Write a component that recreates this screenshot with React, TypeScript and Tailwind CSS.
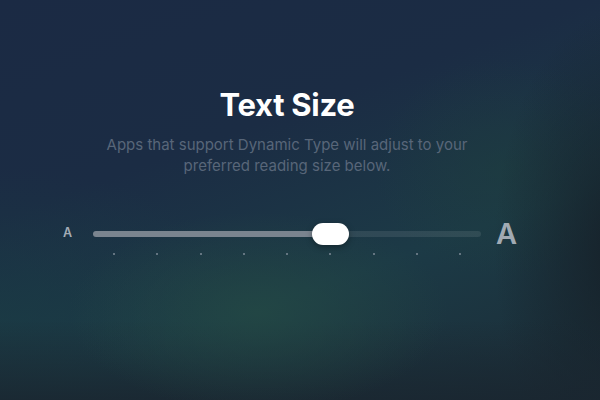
import React from "react";

const TICKS = 9;

export default function App() {
  return (
    <div
      className="relative w-[600px] h-[400px] overflow-hidden bg-[#1b2b42] bg-[radial-gradient(ellipse_190px_100px_at_43%_78%,rgba(36,74,68,0.75),transparent),linear-gradient(180deg,transparent_80%,rgba(26,38,48,0.85)_100%),radial-gradient(ellipse_130px_240px_at_104%_62%,rgba(22,32,40,0.95),transparent),radial-gradient(ellipse_130px_110px_at_84%_42%,rgba(30,62,62,0.55),transparent),radial-gradient(ellipse_260px_160px_at_0%_82%,rgba(26,60,68,0.7),transparent),linear-gradient(160deg,#1b2a44_0%,#1b2c44_35%,#1c3a46_65%,#1b2c36_100%)]"
      style={{ fontFamily: "Inter, 'Noto Sans', sans-serif" }}
    >
      <div className="flex flex-col items-center pt-[86px]">
        <h1 className="text-[31px] leading-[37px] font-bold text-white tracking-[-0.3px] ml-[-26px]">
          Text Size
        </h1>
        <p className="mt-[11px] text-[15px] leading-[21px] text-[#586679] text-center w-[380px] ml-[-26px]">
          Apps that support Dynamic Type will adjust to your preferred reading size below.
        </p>
      </div>

      <div className="flex items-center mt-[43px] pl-[63px]">
        <span className="text-[12.5px] font-semibold text-[#a3acb6] leading-none w-[10px]">A</span>
        <div className="relative ml-[20px] w-[388px]">
          <div className="flex h-[6px] rounded-full overflow-hidden">
            <div className="w-[236px] bg-[#7a848f]" />
            <div className="flex-1 bg-[rgba(255,255,255,0.09)]" />
          </div>
          <div className="absolute left-[219px] top-[-8px] w-[37px] h-[22px] rounded-full bg-white shadow-[0_2px_6px_rgba(0,0,0,0.35)]" />
          <div className="absolute left-0 right-0 top-[22px] flex justify-between px-[20px]">
            {Array.from({ length: TICKS }).map((_, i) => (
              <span key={i} className="w-[2px] h-[2px] rounded-full bg-[#7d8a96]" />
            ))}
          </div>
        </div>
        <span className="ml-[15px] text-[29px] font-semibold text-[#a1aab3] leading-none">A</span>
      </div>
    </div>
  );
}
